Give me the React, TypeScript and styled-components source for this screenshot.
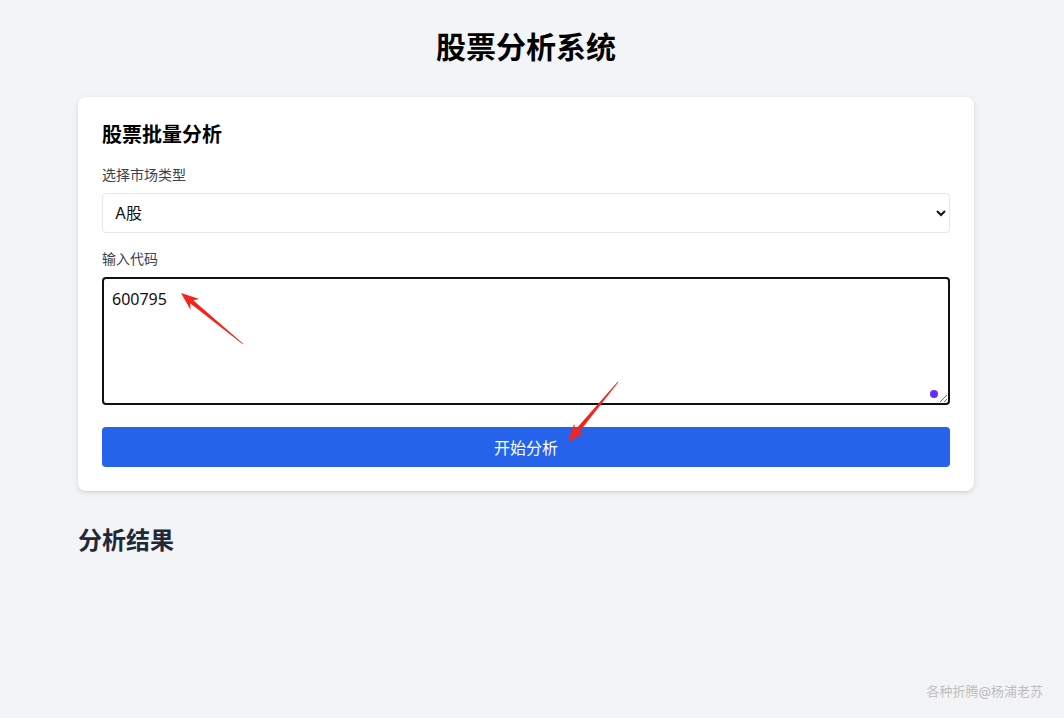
import React, { useState } from 'react';
import styled, { createGlobalStyle } from 'styled-components';

const GlobalStyle = createGlobalStyle`
  html, body {
    margin: 0;
    padding: 0;
    background: #f3f4f6;
  }
  body {
    font-family: Inter, "Noto Sans CJK SC", "Noto Sans", sans-serif;
    color: #111827;
  }
`;

const Page = styled.div`
  position: relative;
  min-height: 718px;
  box-sizing: border-box;
  padding: 29px 12px 0 0;
`;

const Container = styled.main`
  max-width: 896px;
  margin: 0 auto;
`;

const Title = styled.h1`
  margin: 0 0 32px;
  text-align: center;
  font-size: 30px;
  line-height: 36px;
  font-weight: 700;
  color: #000;
`;

const Card = styled.section`
  background: #fff;
  border-radius: 8px;
  padding: 24px;
  box-shadow: 0 2px 6px rgba(0, 0, 0, 0.1), 0 1px 2px rgba(0, 0, 0, 0.06);
`;

const CardTitle = styled.h2`
  margin: 0 0 16px;
  font-size: 20px;
  line-height: 28px;
  font-weight: 700;
  color: #000;
`;

const Label = styled.label`
  display: block;
  margin-bottom: 8px;
  font-size: 14px;
  line-height: 20px;
  color: #374151;
`;

const Select = styled.select`
  display: block;
  width: 100%;
  height: 40px;
  margin-bottom: 16px;
  padding: 0 8px;
  border: 1px solid #e5e7eb;
  border-radius: 4px;
  background: #fff;
  font-family: inherit;
  font-size: 16px;
  color: #111;
  outline: none;
`;

const TextArea = styled.textarea`
  display: block;
  width: 100%;
  height: 128px;
  box-sizing: border-box;
  margin-bottom: 22px;
  padding: 8px;
  border: 2px solid #111;
  border-radius: 4px;
  font-family: "Noto Sans", "Noto Sans CJK SC", sans-serif;
  font-size: 16px;
  line-height: 24px;
  color: #111;
  outline: none;
  resize: vertical;
`;

const Button = styled.button`
  display: block;
  width: 100%;
  height: 40px;
  border: none;
  border-radius: 4px;
  background: #2563eb;
  color: #fff;
  font-family: inherit;
  font-size: 16px;
  cursor: pointer;
`;

const ResultTitle = styled.h2`
  margin: 34px 0 0;
  font-size: 24px;
  line-height: 32px;
  font-weight: 700;
  color: #1f2937;
`;

const Watermark = styled.div`
  position: absolute;
  right: 21px;
  bottom: 18px;
  font-size: 13px;
  color: #bdbdbd;
`;

const Overlay = styled.svg`
  position: absolute;
  left: 0;
  top: 0;
  pointer-events: none;
`;

const Dot = styled.span`
  position: absolute;
  left: 930px;
  top: 390px;
  width: 8px;
  height: 8px;
  border-radius: 50%;
  background: #6d28ff;
`;

type Pt = [number, number];

// tapered annotation arrow, thin tail to a filled head
const arrowPoints = (tail: Pt, tip: Pt) => {
  const dx = tip[0] - tail[0];
  const dy = tip[1] - tail[1];
  const len = Math.hypot(dx, dy);
  const ux = dx / len;
  const uy = dy / len;
  const nx = -uy;
  const ny = ux;
  const at = (d: number, w: number): string =>
    `${tail[0] + ux * d + nx * w},${tail[1] + uy * d + ny * w}`;
  const headBase = len - 17;
  return [
    at(0, 0.4),
    at(headBase + 3, 2.2),
    at(headBase - 1, 7),
    at(len, 0),
    at(headBase - 1, -7),
    at(headBase + 3, -2.2),
    at(0, -0.4),
  ].join(' ');
};

export default function App() {
  const [market, setMarket] = useState('A');
  const [codes, setCodes] = useState('600795');

  return (
    <>
      <GlobalStyle />
      <Page>
        <Container>
          <Title>股票分析系统</Title>
          <Card>
            <CardTitle>股票批量分析</CardTitle>
            <Label>选择市场类型</Label>
            <Select value={market} onChange={e => setMarket(e.target.value)}>
              <option value="A">A股</option>
              <option value="HK">港股</option>
              <option value="US">美股</option>
            </Select>
            <Label>输入代码</Label>
            <TextArea value={codes} onChange={e => setCodes(e.target.value)} />
            <Button>开始分析</Button>
          </Card>
          <ResultTitle>分析结果</ResultTitle>
        </Container>
        <Dot />
        <Overlay width="1064" height="718">
          <polygon points={arrowPoints([243, 344], [181, 293])} fill="#f3261c" />
          <polygon points={arrowPoints([618, 382], [568, 442])} fill="#f3261c" />
        </Overlay>
        <Watermark>各种折腾@杨浦老苏</Watermark>
      </Page>
    </>
  );
}
